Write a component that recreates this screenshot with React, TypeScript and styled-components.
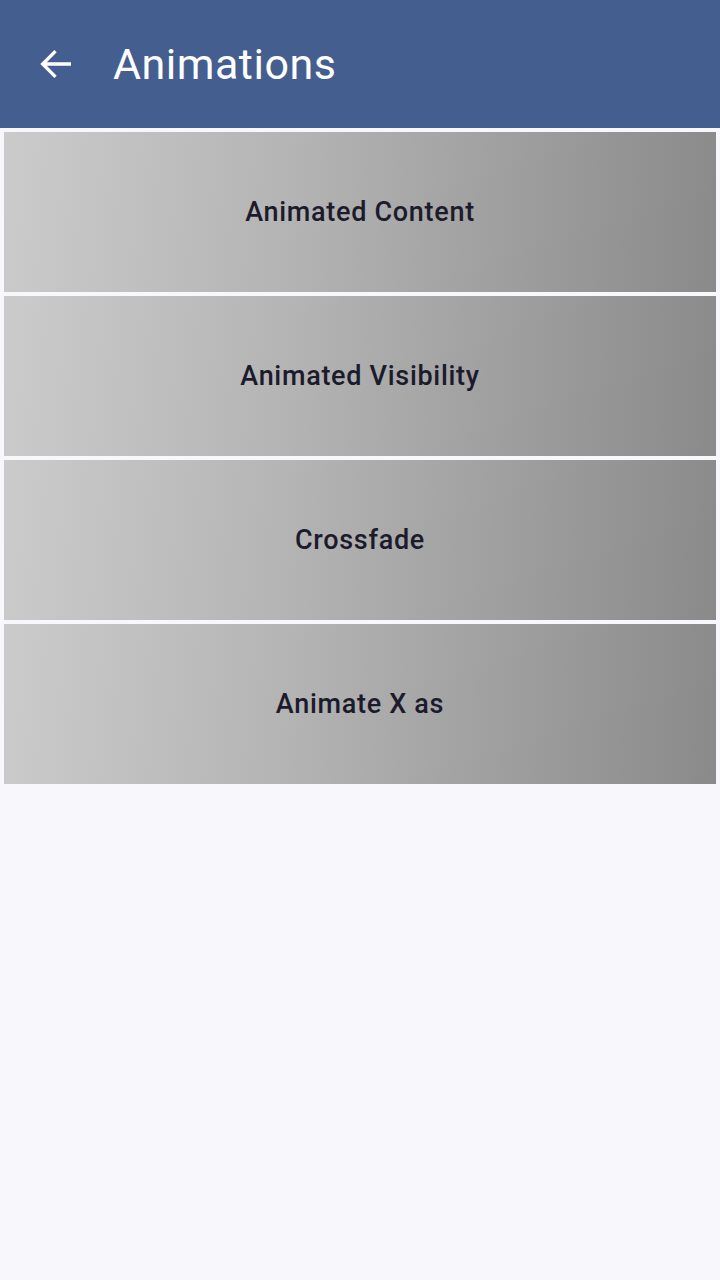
import React from "react";
import styled, { createGlobalStyle } from "styled-components";

const Global = createGlobalStyle`
  html, body { margin: 0; padding: 0; background: #f8f8fc; }
  body { font-family: Roboto, "Noto Sans", sans-serif; }
`;

const Page = styled.div`
  min-height: 1280px;
  background: #f8f8fc;
  display: flex;
  flex-direction: column;
`;

const TopBar = styled.header`
  height: 128px;
  background: #445e90;
  display: flex;
  align-items: center;
  padding-left: 36px;
  gap: 37px;
  box-sizing: border-box;
`;

const BackButton = styled.button`
  width: 40px;
  height: 40px;
  padding: 0;
  border: 0;
  background: transparent;
  display: flex;
  align-items: center;
  justify-content: center;
  color: #ffffff;
`;

const Title = styled.h1`
  margin: 0;
  font-family: Roboto, sans-serif;
  font-weight: 400;
  font-size: 43px;
  color: #ffffff;
  letter-spacing: 0.5px;
`;

const List = styled.div`
  display: flex;
  flex-direction: column;
  gap: 4px;
  padding: 4px 4px;
`;

const Card = styled.button`
  height: 160px;
  border: 0;
  margin: 0;
  padding: 0;
  display: flex;
  align-items: center;
  justify-content: center;
  background: linear-gradient(95deg, #cbcbcb 0%, #b4b4b4 40%, #8a8a8a 100%);
  font-family: Roboto, sans-serif;
  font-weight: 500;
  font-size: 27px;
  color: #1c1b2b;
  letter-spacing: 0.7px;
  cursor: pointer;
`;

const items = ["Animated Content", "Animated Visibility", "Crossfade", "Animate X as"];

export default function App() {
  return (
    <Page>
      <Global />
      <TopBar>
        <BackButton aria-label="Back">
          <svg width="40" height="40" viewBox="0 0 24 24" fill="none">
            <path d="M20 12H4.5M11 5l-7 7 7 7" stroke="#fff" strokeWidth="2" strokeLinecap="square" />
          </svg>
        </BackButton>
        <Title>Animations</Title>
      </TopBar>
      <List>
        {items.map((t) => (
          <Card key={t}>{t}</Card>
        ))}
      </List>
    </Page>
  );
}
